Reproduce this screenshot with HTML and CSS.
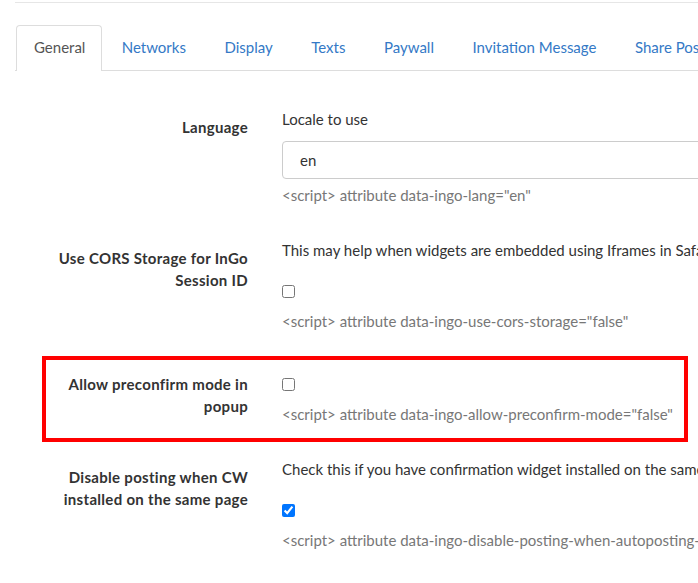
FILE: index.html
```html
<!DOCTYPE html>
<html lang="en">
<head>
    <meta charset="UTF-8">
    <title>Widget settings</title>
    <link rel="stylesheet" href="styles.css">
</head>
<body>
<div id="page">
    <div class="topline"></div>
    <ul class="tabs">
        <li class="active"><a href="#">General</a></li>
        <li><a href="#">Networks</a></li>
        <li><a href="#">Display</a></li>
        <li><a href="#">Texts</a></li>
        <li><a href="#">Paywall</a></li>
        <li><a href="#">Invitation Message</a></li>
        <li><a href="#">Share Posts</a></li>
    </ul>

    <div class="row">
        <label class="label">Language</label>
        <div class="field">
            <p class="desc">Locale to use</p>
            <input class="text" type="text" value="en">
            <p class="help">&lt;script&gt; attribute data-ingo-lang="en"</p>
        </div>
    </div>

    <div class="row">
        <label class="label">Use CORS Storage for InGo Session ID</label>
        <div class="field">
            <p class="desc">This may help when widgets are embedded using Iframes in Safari and other browsers</p>
            <div class="check"><input type="checkbox"></div>
            <p class="help flush">&lt;script&gt; attribute data-ingo-use-cors-storage="false"</p>
        </div>
    </div>

    <div class="mark">
        <div class="row">
            <label class="label">Allow preconfirm mode in popup</label>
            <div class="field">
                <div class="check"><input type="checkbox"></div>
                <p class="help flush">&lt;script&gt; attribute data-ingo-allow-preconfirm-mode="false"</p>
            </div>
        </div>
    </div>

    <div class="row">
        <label class="label">Disable posting when CW installed on the same page</label>
        <div class="field">
            <p class="desc">Check this if you have confirmation widget installed on the same page</p>
            <div class="check"><input type="checkbox" checked></div>
            <p class="help flush">&lt;script&gt; attribute data-ingo-disable-posting-when-autoposting-enabled="true"</p>
        </div>
    </div>
</div>
</body>
</html>
```
FILE: styles.css
```css
html,body{
    margin: 0;
    padding: 0;
    overflow: hidden;
    background: #fff;
}
body{
    font-family: Lato, "Liberation Sans", sans-serif;
    font-size: 15px;
    line-height: 22px;
    color: #333;
}
#page{
    width: 1000px;
    padding-left: 15px;
}
.topline{
    height: 1px;
    margin-top: 2px;
    background: #e6e6e6;
}
.tabs{
    display: flex;
    margin: 22px 0 0;
    padding: 0;
    list-style: none;
    border-bottom: 1px solid #dddddd;
}
.tabs li{
    margin-bottom: -1px;
}
.tabs a{
    display: block;
    height: 44px;
    line-height: 42px;
    padding: 0 18.25px;
    border: 1px solid transparent;
    border-bottom: none;
    border-radius: 4px 4px 0 0;
    color: #3479c6;
    text-decoration: none;
}
.tabs .active a{
    color: #555;
    background: #fff;
    border-color: #dddddd;
    height: 45px;
}
.tabs li:first-child a{
    margin-left: 1px;
    padding: 0 16px 0 17px;
}

.row{
    display: grid;
    grid-template-columns: 200px 1fr;
    column-gap: 34px;
    padding-left: 33px;
    margin-bottom: 33px;
}
.tabs + .row{
    margin-top: 37px;
}
.label{
    padding-top: 8px;
    text-align: right;
    font-weight: bold;
    letter-spacing: 0.3px;
}
.desc{
    margin: 0 0 11px;
}
.text{
    display: block;
    box-sizing: border-box;
    width: 600px;
    height: 38px;
    padding: 0 17px;
    border: 1px solid #cccccc;
    border-radius: 4px;
    font: inherit;
    color: #333;
}
.help{
    margin: 5px 0 0;
    color: #777;
}
.help.flush{
    margin-top: 0;
}
.check{
    height: 38px;
    display: flex;
    align-items: center;
}
.check input{
    margin: 0;
    width: 13px;
    height: 13px;
}

.mark{
    width: 638px;
    margin: -9px 0 16px 27px;
    padding: 5px 0 13px;
    border: 4px solid #ff0000;
}
.mark .row{
    padding-left: 2px;
    margin-bottom: 0;
}
```
